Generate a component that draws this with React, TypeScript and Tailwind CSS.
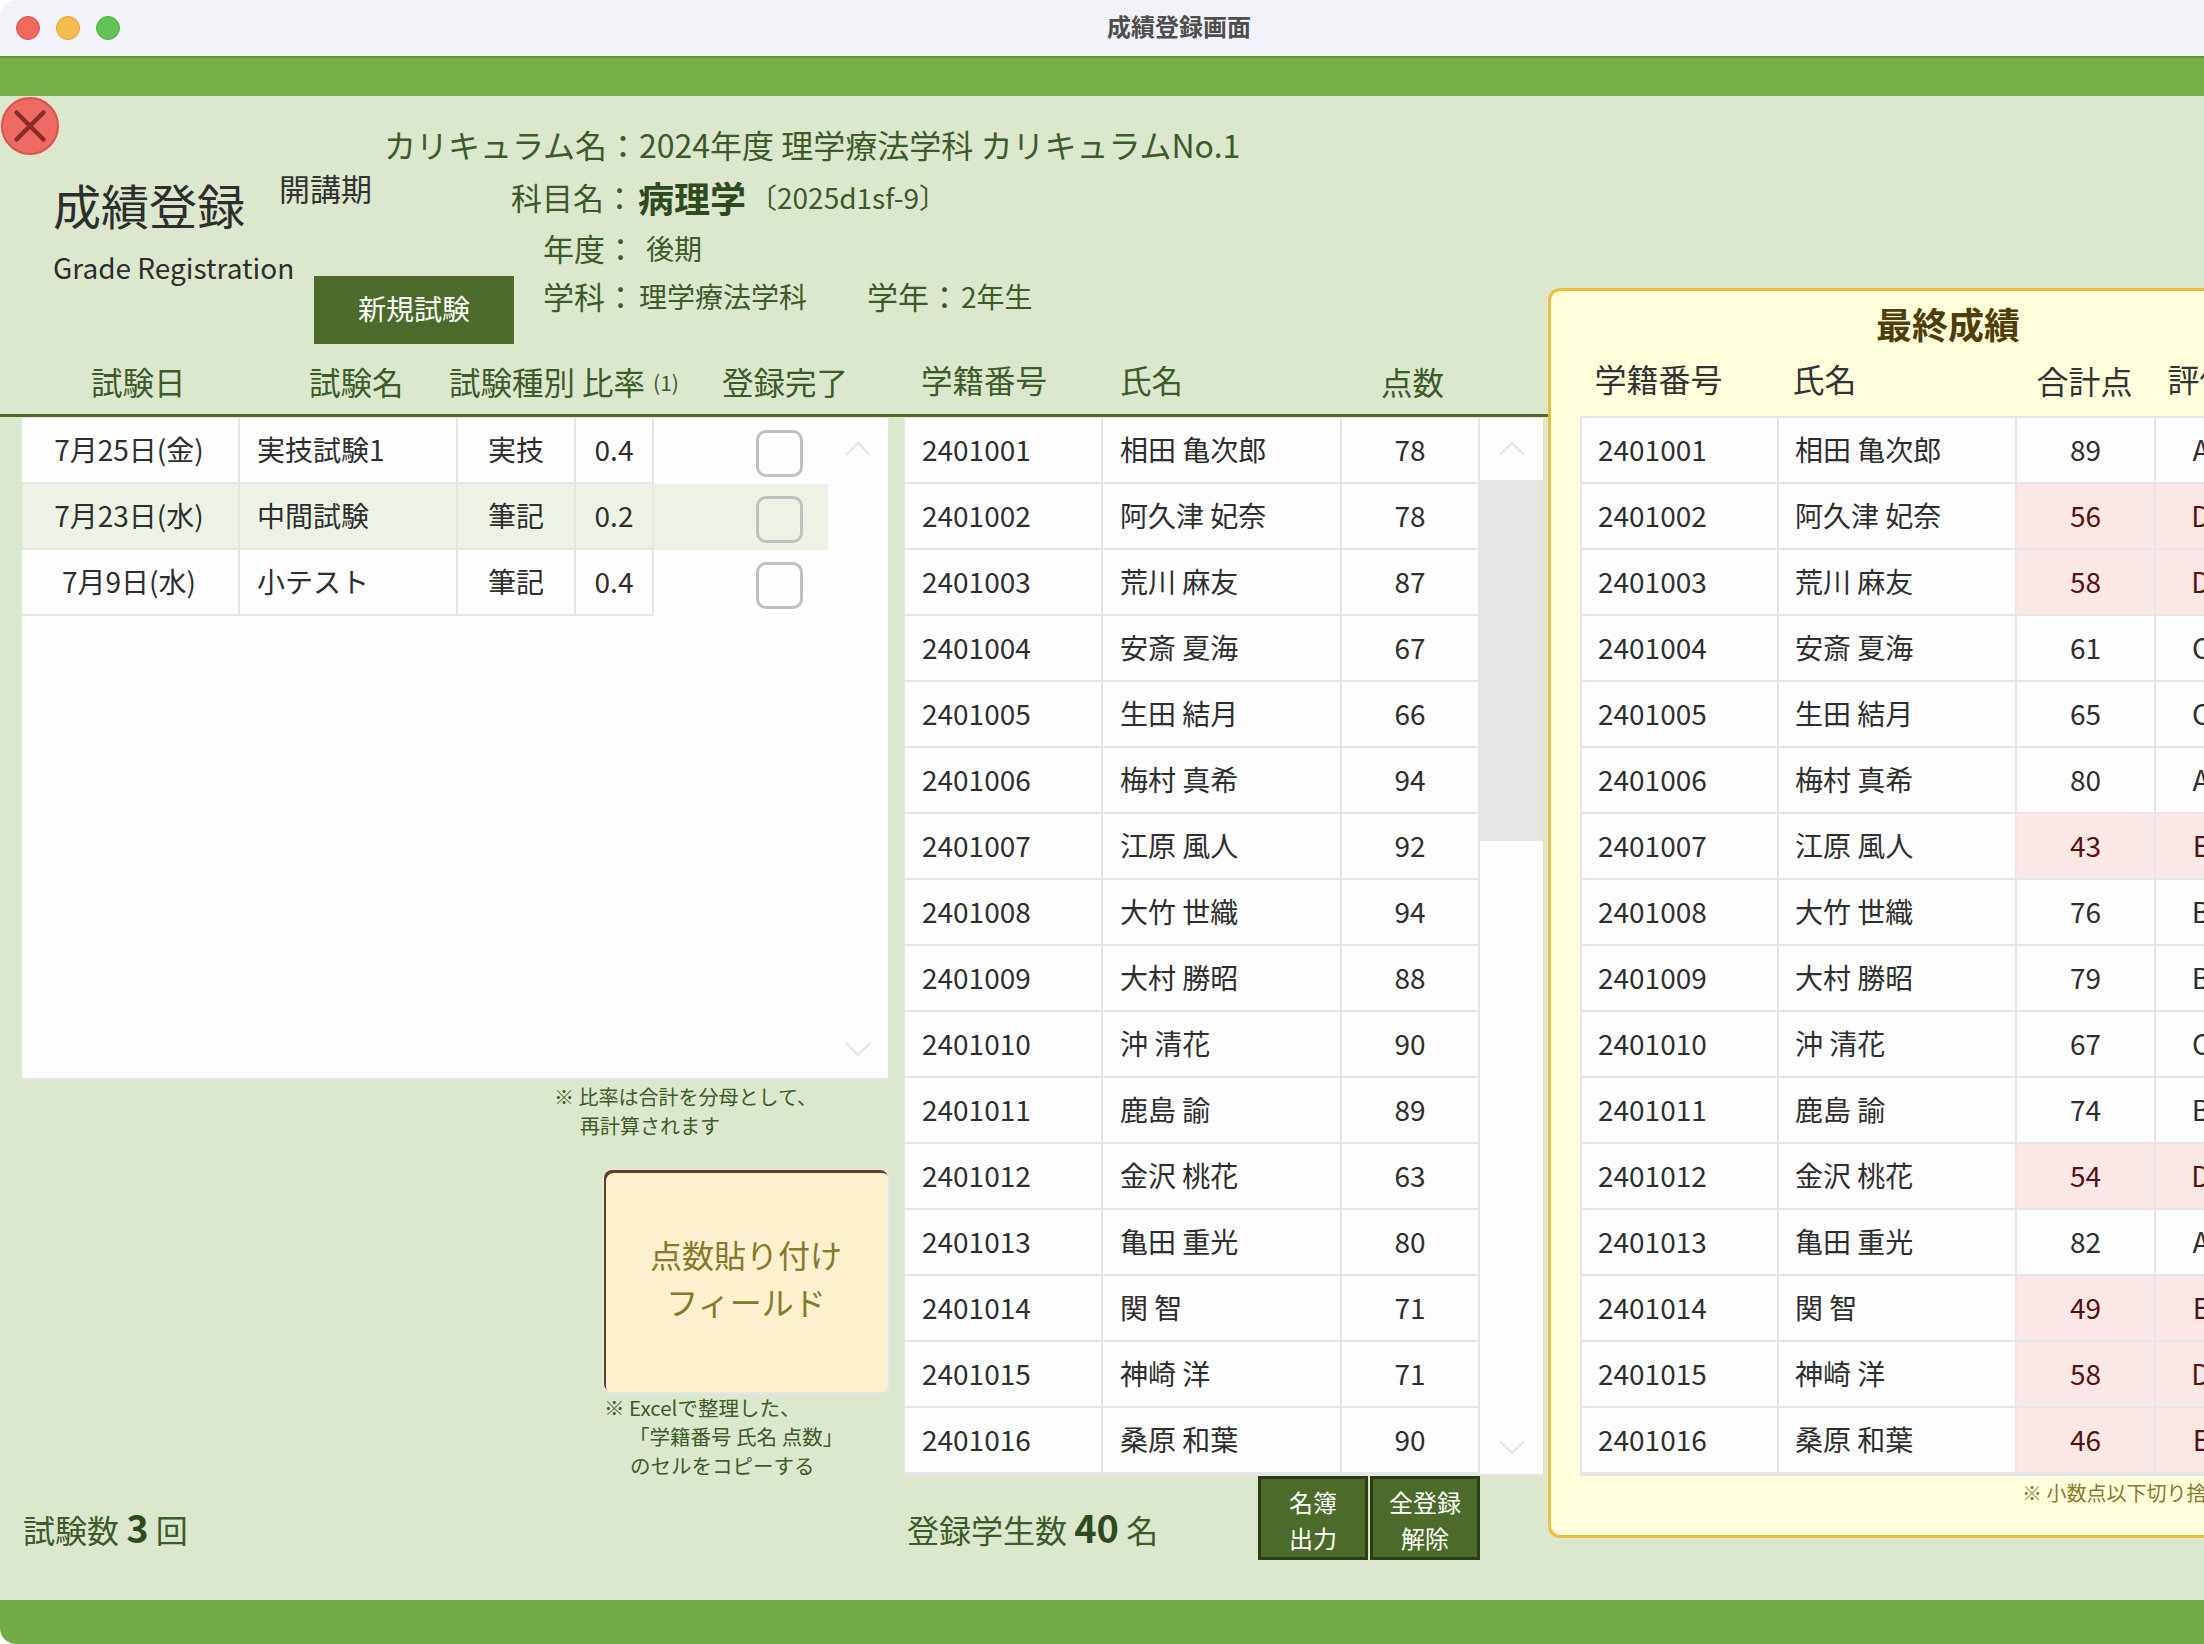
const examRows = [
  { date: "7月25日(金)", name: "実技試験1", kind: "実技", ratio: "0.4" },
  { date: "7月23日(水)", name: "中間試験", kind: "筆記", ratio: "0.2" },
  { date: "7月9日(水)", name: "小テスト", kind: "筆記", ratio: "0.4" },
];

const students = [
  { id: "2401001", name: "相田 亀次郎", score: 78, total: 89, grade: "A" },
  { id: "2401002", name: "阿久津 妃奈", score: 78, total: 56, grade: "D" },
  { id: "2401003", name: "荒川 麻友", score: 87, total: 58, grade: "D" },
  { id: "2401004", name: "安斎 夏海", score: 67, total: 61, grade: "C" },
  { id: "2401005", name: "生田 結月", score: 66, total: 65, grade: "C" },
  { id: "2401006", name: "梅村 真希", score: 94, total: 80, grade: "A" },
  { id: "2401007", name: "江原 風人", score: 92, total: 43, grade: "E" },
  { id: "2401008", name: "大竹 世織", score: 94, total: 76, grade: "B" },
  { id: "2401009", name: "大村 勝昭", score: 88, total: 79, grade: "B" },
  { id: "2401010", name: "沖 清花", score: 90, total: 67, grade: "C" },
  { id: "2401011", name: "鹿島 諭", score: 89, total: 74, grade: "B" },
  { id: "2401012", name: "金沢 桃花", score: 63, total: 54, grade: "D" },
  { id: "2401013", name: "亀田 重光", score: 80, total: 82, grade: "A" },
  { id: "2401014", name: "関 智", score: 71, total: 49, grade: "E" },
  { id: "2401015", name: "神崎 洋", score: 71, total: 58, grade: "D" },
  { id: "2401016", name: "桑原 和葉", score: 90, total: 46, grade: "E" },
];

function Chevron({ down = false }: { down?: boolean }) {
  return (
    <svg width="26" height="14" viewBox="0 0 26 14" fill="none" stroke="#e4e4e4" strokeWidth="2">
      <path d={down ? "M1 1 L13 13 L25 1" : "M1 13 L13 1 L25 13"} />
    </svg>
  );
}

export default function App() {
  return (
    <div className="relative w-[2204px] h-[1644px] overflow-hidden bg-white font-['Noto_Sans_CJK_JP','Noto_Sans',sans-serif]">
      <div className="w-full h-full flex flex-col rounded-tl-[16px] rounded-bl-[16px] overflow-hidden">
        {/* Title bar */}
        <div className="relative h-[56px] shrink-0 bg-[#f1f3f8] flex items-center justify-center pl-[154px] pb-[5px]">
          <div className="absolute left-[16px] top-[16px] flex gap-[16px]">
            <div className="w-[24px] h-[24px] rounded-full bg-[#ee6a5f] border border-[#d9574d]" />
            <div className="w-[24px] h-[24px] rounded-full bg-[#f5bd4f] border border-[#dea63c]" />
            <div className="w-[24px] h-[24px] rounded-full bg-[#61c454] border border-[#52ad46]" />
          </div>
          <span className="text-[24px] leading-none font-bold text-[#4d4d4d]">成績登録画面</span>
        </div>
        <div className="h-[40px] shrink-0 bg-[#78ae48] border-t-2 border-[#5f9733]" />

        <div className="relative flex-1 flex bg-[#dce8cd] min-h-0">
          {/* Close button */}
          <button className="absolute left-[1px] top-[1px] w-[58px] h-[58px] rounded-full bg-[#ee6a62] border-2 border-[#d9534f] flex items-center justify-center">
            <svg width="34" height="34" viewBox="0 0 34 34" stroke="#8a2c28" strokeWidth="4.5" strokeLinecap="round">
              <path d="M3.5 3.5 L30.5 30.5 M30.5 3.5 L3.5 30.5" />
            </svg>
          </button>

          {/* Left and centre area */}
          <div className="w-[1548px] shrink-0 flex flex-col">
            {/* Header block */}
            <div className="h-[270px] flex shrink-0">
              <div className="w-[314px] pl-[53px] pt-[77px] shrink-0">
                <div className="text-[48px] leading-[62px] text-[#2e2e2e]">成績登録</div>
                <div className="mt-[14px] text-[28px] leading-[36px] text-[#2e2e2e] whitespace-nowrap">Grade Registration</div>
              </div>
              <div className="w-[197px] shrink-0 flex flex-col">
                <div className="ml-[-35px] mt-[70px] text-[31px] leading-[44px] text-[#333333]">開講期</div>
                <button className="mt-[66px] w-[200px] h-[68px] bg-[#4c6a2a] text-white text-[28px] leading-none pb-[4px]">新規試験</button>
              </div>
              <div className="text-[#3d5a2a] whitespace-nowrap">
                <div className="ml-[-127px] mt-[26px] h-[44px] flex items-center text-[32px]">
                  カリキュラム名：2024年度 理学療法学科 カリキュラムNo.1
                </div>
                <div className="mt-[6px] h-[50px] flex items-center text-[31px]">
                  <span>科目名：</span>
                  <span className="text-[36px] font-bold text-[#2f4a1f] ml-[3px]">病理学</span>
                  <span className="text-[28px] ml-[3px]">〔2025d1sf-9〕</span>
                </div>
                <div className="ml-[32px] mt-[3px] h-[46px] flex items-center text-[31px]">
                  <span>年度：</span>
                  <span className="text-[28px] ml-[10px]">後期</span>
                </div>
                <div className="ml-[32px] mt-[2px] h-[46px] flex items-center text-[31px]">
                  <span>学科：</span>
                  <span className="text-[28px] ml-[3px]">理学療法学科</span>
                  <span className="ml-[60px]">学年：</span>
                  <span className="text-[28px] ml-[1px]">2年生</span>
                </div>
              </div>
            </div>

            {/* Column headers */}
            <div className="h-[51px] flex items-center shrink-0 text-[31.5px] leading-none text-[#3d5a2a] border-b-[3px] border-[#4c6a2a] pb-[16px] whitespace-nowrap">
              <span className="ml-[91px]">試験日</span>
              <span className="ml-[123.5px]">試験名</span>
              <span className="ml-[45.5px]">試験種別</span>
              <span className="ml-[7px]">比率</span>
              <span className="ml-[8px] text-[21px]">(1)</span>
              <span className="ml-[43px]">登録完了</span>
              <span className="ml-[73px] mt-[-4px]">学籍番号</span>
              <span className="ml-[73px] mt-[-4px]">氏名</span>
              <span className="ml-[198px]">点数</span>
            </div>

            <div className="flex-1 flex min-h-0">
              {/* Exam list column */}
              <div className="w-[904px] shrink-0 pl-[22px] flex flex-col">
                <div className="relative w-[867px] h-[663px] bg-[#fdfdfd] border-t border-r border-b-2 border-[#e6e6e6] shrink-0">
                  {examRows.map((row, i) => (
                    <div key={row.name} className={`flex h-[66px] text-[28px] text-[#2e2e2e] ${i === 1 ? "w-[806px] bg-[#edf3e4]" : ""}`}>
                      <div className="w-[218px] flex items-center justify-center border-r-2 border-b-2 border-[#e6e6e6] pr-[2px] pb-[2px]">{row.date}</div>
                      <div className="w-[218px] flex items-center pl-[17px] pb-[2px] border-r-2 border-b-2 border-[#e6e6e6]">{row.name}</div>
                      <div className="w-[118px] flex items-center justify-center pb-[2px] border-r-2 border-b-2 border-[#e6e6e6]">{row.kind}</div>
                      <div className="w-[78px] flex items-center justify-center pb-[2px] border-r-2 border-b-2 border-[#e6e6e6]">{row.ratio}</div>
                      <div className="pl-[102px] pt-[5px] flex items-center">
                        <div className="w-[47px] h-[47px] rounded-[10px] border-[3px] border-[#c0c0c0]" />
                      </div>
                    </div>
                  ))}
                  <div className="absolute right-[17px] top-[24px]">
                    <Chevron />
                  </div>
                  <div className="absolute right-[17px] bottom-[22px]">
                    <Chevron down />
                  </div>
                </div>

                <div className="w-[867px] flex flex-col items-end">
                  <div className="w-[335px] mt-[2px] text-[20px] leading-[29px] text-[#3d5a2a]">
                    <div>※ 比率は合計を分母として、</div>
                    <div className="pl-[26px]">再計算されます</div>
                  </div>
                  <div className="w-[284px] h-[222px] mr-[1px] mt-[30px] rounded-[8px] bg-[#fdf0cf] shadow-[inset_2px_3px_0_#5b4220,0_0_0_2px_#e6e6e6] flex flex-col items-center justify-center pb-[6px] text-[32px] leading-[47px] text-[#857a2a]">
                    <div>点数貼り付け</div>
                    <div>フィールド</div>
                  </div>
                  <div className="w-[285px] mt-[1px] text-[20.5px] leading-[29px] text-[#3d5a2a] whitespace-nowrap">
                    <div>※ Excelで整理した、</div>
                    <div className="pl-[25px]">「学籍番号 氏名 点数」</div>
                    <div className="pl-[26px]">のセルをコピーする</div>
                  </div>
                </div>

                <div className="mt-[25px] ml-[1px] text-[32px] leading-[44px] text-[#3d5a2a]">
                  試験数 <span className="text-[38px] font-bold text-[#2f4a1f]">3</span> 回
                </div>
              </div>

              {/* Student list column */}
              <div className="w-[639px] shrink-0 flex flex-col">
                <div className="flex h-[1059px] bg-[#fdfdfd] border-t border-l border-b-2 border-[#e6e6e6] shrink-0">
                  <div className="w-[575px] shrink-0">
                    {students.map((s) => (
                      <div key={s.id} className="flex h-[66px] text-[28px] text-[#2e2e2e]">
                        <div className="w-[198px] flex items-center pl-[17px] pb-[2px] border-r-2 border-b-2 border-[#e6e6e6]">{s.id}</div>
                        <div className="w-[239px] flex items-center pl-[17px] pb-[2px] border-r-2 border-b-2 border-[#e6e6e6]">{s.name}</div>
                        <div className="w-[138px] flex items-center justify-center pb-[2px] border-r-2 border-b-2 border-[#e6e6e6]">{s.score}</div>
                      </div>
                    ))}
                  </div>
                  <div className="flex-1 flex flex-col">
                    <div className="h-[62px] flex items-center justify-center">
                      <Chevron />
                    </div>
                    <div className="h-[361px] bg-[#e5e5e5]" />
                    <div className="flex-1 flex items-end justify-center pb-[20px]">
                      <Chevron down />
                    </div>
                  </div>
                </div>
                <div className="flex items-start">
                  <div className="w-[351px] mt-[29px] ml-[3px] text-[32px] leading-[44px] text-[#3d5a2a] whitespace-nowrap">
                    登録学生数 <span className="text-[38px] font-bold text-[#2f4a1f]">40</span> 名
                  </div>
                  <button className="w-[110px] h-[84px] pt-[3px] bg-[#4c6a2a] border-[3px] border-[#2a3d14] text-white text-[24px] leading-[36px]">
                    名簿<br />出力
                  </button>
                  <button className="ml-[2px] w-[110px] h-[84px] pt-[3px] bg-[#4c6a2a] border-[3px] border-[#2a3d14] text-white text-[24px] leading-[36px]">
                    全登録<br />解除
                  </button>
                </div>
              </div>
            </div>
          </div>

          {/* Final grades panel */}
          <div className="shrink-0 w-[760px] h-[1250px] mt-[192px] rounded-l-[12px] bg-[#ffffdc] border-[3px] border-[#efbd3f] flex flex-col">
            <div className="h-[64px] pt-[7px] text-center text-[36px] leading-[50px] font-bold text-[#4f3d0a] w-[794px]">最終成績</div>
            <div className="h-[61px] flex text-[32px] leading-[46px] text-[#333333] whitespace-nowrap">
              <span className="ml-[43.5px]">学籍番号</span>
              <span className="ml-[70px]">氏名</span>
              <span className="ml-[180px] mt-[2px]">合計点</span>
              <span className="ml-[35px]">評価</span>
            </div>
            <div className="ml-[29px] h-[1060px] border-t-2 border-l-2 border-b-2 border-[#e6e6e6] bg-[#fdfdfd]">
              {students.map((s) => {
                const low = s.total < 60;
                return (
                  <div key={s.id} className="flex h-[66px] text-[28px] text-[#2e2e2e]">
                    <div className="w-[197px] shrink-0 flex items-center pl-[16px] pb-[2px] border-r-2 border-b-2 border-[#e6e6e6]">{s.id}</div>
                    <div className="w-[238px] shrink-0 flex items-center pl-[16px] pb-[2px] border-r-2 border-b-2 border-[#e6e6e6]">{s.name}</div>
                    <div className={`w-[139px] shrink-0 flex items-center justify-center pb-[2px] border-r-2 border-b-2 border-[#e6e6e6] ${low ? "bg-[#fbe8e6] text-[#5a1010]" : ""}`}>{s.total}</div>
                    <div className={`w-[90px] shrink-0 flex items-center justify-center pb-[2px] border-b-2 border-[#e6e6e6] ${low ? "bg-[#fbe8e6] text-[#5a1010]" : ""}`}>{s.grade}</div>
                  </div>
                );
              })}
            </div>
            <div className="pl-[471px] mt-[2px] text-[20px] leading-[30px] text-[#857a2a] whitespace-nowrap">※ 小数点以下切り捨て</div>
          </div>
        </div>

        <div className="h-[44px] shrink-0 bg-[#75ab47]" />
      </div>
    </div>
  );
}
